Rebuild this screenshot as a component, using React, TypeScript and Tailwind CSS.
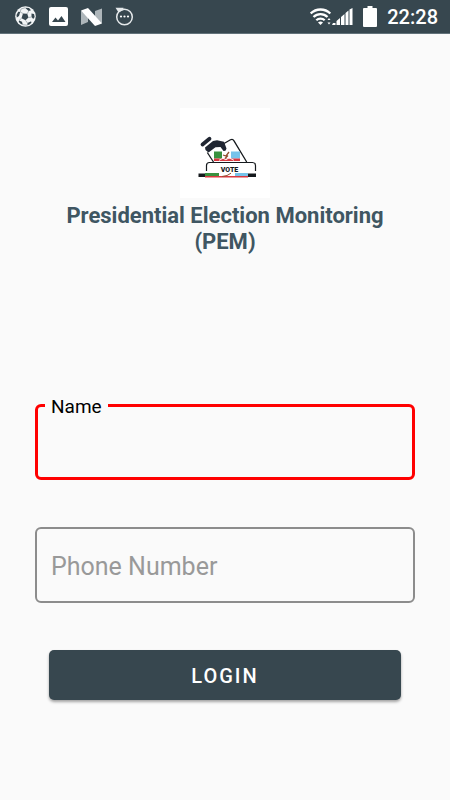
import { useState } from 'react'

function SoccerIcon() {
  return (
    <svg className="size-[21px]" viewBox="0 0 21 21" aria-hidden="true">
      <circle cx="10.5" cy="10.5" r="10.3" fill="#f3f5f6" />
      <g fill="#37474f">
        <path d="M8 7.500l4.200.3 1.300 3.700-3 2.800-4-2z" />
        <path d="M10 1.800l4 .2 2 2.200-2.300.8z" />
        <path d="M1.500 9l1.700-3.300L5.200 6 4 10l-2.200 1.500z" />
        <path d="M16.500 7.500l2.500.5.7 3-1.500 2-1.700-2z" />
        <path d="M4 14.500l3 1.200.8 3-2-.7-2-2z" />
        <path d="M12.500 17l3.200-1.500 1 .5-1.700 2.200-2.700 1z" />
      </g>
      <path
        d="M8 7.500L5.200 6M12.200 7.800l1.500-2.800M13.500 11.500l3-.5M10.500 14.300l2 2.700M6.500 12.300L4 14.500M10 1.800L6 3 5.200 6M7.800 18.700l4.500.5"
        fill="none"
        stroke="#8d989d"
        strokeWidth=".7"
      />
    </svg>
  )
}

function PhotoIcon() {
  return (
    <svg className="size-[19px]" viewBox="0 0 19 19" aria-hidden="true">
      <rect width="19" height="19" rx="2" fill="#fff" />
      <path d="M3 15l3.500-4.500L9 13.500 12.500 9l4 6z" fill="#37474f" />
    </svg>
  )
}

function NougatIcon() {
  return (
    <svg className="h-[18px] w-[21px]" viewBox="0 0 21 18" aria-hidden="true">
      <path d="M0 3l7 1v10l-7 3z" fill="#aeb6ba" />
      <path d="M14 3l7-2.500V15l-7 2z" fill="#aeb6ba" />
      <path d="M0 2.500L7 0 21 15.500 14 18z" fill="#fff" />
    </svg>
  )
}

function ChatIcon() {
  return (
    <svg className="size-[19px]" viewBox="0 0 19 19" fill="none" aria-hidden="true">
      <circle cx="9.500" cy="10" r="7.800" stroke="#e4e8ea" strokeWidth="1.500" />
      <path d="M.5.800h8v2.200L3.500 5.500z" fill="#e4e8ea" />
      <g fill="#fff">
        <circle cx="6" cy="9.500" r="1.100" />
        <circle cx="9.500" cy="9.500" r="1.100" />
        <circle cx="13" cy="9.500" r="1.100" />
      </g>
    </svg>
  )
}

function WifiIcon() {
  return (
    <svg className="h-[18px] w-[22px]" viewBox="0 0 22 18" fill="none" aria-hidden="true">
      <g stroke="#fff" strokeWidth="2.300">
        <path d="M.7 5.500a14 14 0 0 1 19.600 0" />
        <path d="M3.500 9a10 10 0 0 1 14 0" />
        <path d="M6.300 12.300a6 6 0 0 1 8.400 0" />
      </g>
      <path d="M8 14.500q2.500-2 5 0L10.500 17z" fill="#fff" />
      <path d="M17.500 12h3L19 10zM17.500 14.500h3L19 16.500z" fill="#fff" />
    </svg>
  )
}

function SignalIcon() {
  return (
    <svg className="h-[17px] w-[21px]" viewBox="0 0 21 17" fill="#fff" aria-hidden="true">
      <path d="M1 15h2.500v2H0zM4.500 13L8 10v7H4.500zM9 9l3.500-3v11H9zM13.500 5L16.500 2.500V17h-3zM17.500 1.500L20.500 0v17h-3z" />
    </svg>
  )
}

function BatteryIcon() {
  return (
    <svg className="h-[21px] w-[14px]" viewBox="0 0 14 21" fill="#fff" aria-hidden="true">
      <path d="M4.500 0h5v2H13q1 0 1 1v17q0 1-1 1H1q-1 0-1-1V3q0-1 1-1h3.500z" />
    </svg>
  )
}

function VoteLogo() {
  return (
    <svg className="size-[90px] bg-white" viewBox="0 0 90 90" role="img" aria-label="Vote">
      {/* Ballot paper */}
      <path d="M44 35.500l6.500-3.700q2.200-1.200 3.500 1L66.700 54" fill="none" stroke="#15191d" strokeWidth="1.300" />
      <path d="M27.300 44.500l6.200 9.500" fill="none" stroke="#15191d" strokeWidth="1.300" />
      <rect x="34" y="43.500" width="8" height="7" fill="#39913f" />
      <rect x="51" y="43.500" width="9" height="7" fill="#77c3ea" />
      <rect x="34" y="50.500" width="26" height="2.500" fill="#d93840" />
      <path d="M39 52.300l4-2 3 1.500 3-2 5 2.500" fill="none" stroke="#fff" strokeWidth=".9" />
      <path d="M43 47l3 1 3-4M45 50.500l3-3" fill="none" stroke="#91502f" strokeWidth="1.300" />

      {/* Hand */}
      <path d="M22.500 36.500l7-5.800" stroke="#202632" strokeWidth="3.800" strokeLinecap="round" />
      <path d="M25.500 42L25 39.500l8-6.500 4-.7 7 1.500 2.500 6.700q-.5 3-3 2.500l-3-4-5 .3-7 5.200z" fill="#202632" />

      {/* Box */}
      <path d="M26.500 63v-5.500q0-3 3-3h43q3 0 3 3V63" fill="#fff" stroke="#15191d" strokeWidth="1.200" />
      <text x="49.500" y="64" textAnchor="middle" fontFamily="Roboto, sans-serif" fontSize="7" fontWeight="900" fill="#15191d">VOTE</text>
      <rect x="18.500" y="65.500" width="57.500" height="3.500" fill="#15191d" />
      <rect x="25" y="65" width="14" height="3" fill="#39913f" />
      <rect x="39" y="65" width="16" height="3" fill="#fff" />
      <rect x="55" y="65" width="13" height="3" fill="#77c3ea" />
      <rect x="25" y="68" width="43" height="1.500" fill="#d93840" />
      <path d="M42 68.500l5-1 4-2.300" fill="none" stroke="#91502f" strokeWidth="1" />
    </svg>
  )
}

export default function App() {
  const [name, setName] = useState('')
  const [phone, setPhone] = useState('')

  return (
    <div className="min-h-screen bg-[#fafafa] font-['Roboto',sans-serif]">

      {/* Status bar */}
      <header className="flex h-[34px] items-center justify-between border-b border-[#62727a] bg-[#37474f] pr-3 pl-[15px] text-white">
        <div className="flex items-center gap-[13px]">
          <SoccerIcon />
          <PhotoIcon />
          <NougatIcon />
          <ChatIcon />
        </div>
        <div className="flex items-center">
          <WifiIcon />
          <SignalIcon />
          <div className="ml-2.5 flex items-center gap-2.5">
            <BatteryIcon />
            <span className="pt-px text-xl font-medium">22:28</span>
          </div>
        </div>
      </header>

      <main className="px-[35px] pt-[74px] pb-10">
        {/* Brand */}
        <div className="flex flex-col items-center">
          <VoteLogo />
          <h1 className="mt-[5px] text-center text-[22px] leading-[26px] font-bold text-[#3f5662]">
            Presidential Election Monitoring (PEM)
          </h1>
        </div>

        <form className="mt-[149px]" onSubmit={(e) => e.preventDefault()}>
          {/* Name */}
          <div className="relative">
            <label htmlFor="name" className="absolute -top-[7px] left-2.5 bg-[#fafafa] px-1.5 text-[19px] leading-5 text-black">
              Name
            </label>
            <input
              id="name"
              value={name}
              onChange={(e) => setName(e.target.value)}
              className="block h-[76px] w-full rounded-md border-3 border-[#ff0000] px-3.5 text-[25px] text-black outline-none"
            />
          </div>

          {/* Phone */}
          <input
            id="phone"
            type="tel"
            aria-label="Phone Number"
            placeholder="Phone Number"
            value={phone}
            onChange={(e) => setPhone(e.target.value)}
            className="mt-[47px] block h-[76px] w-full rounded-md border-2 border-[#8c8c8c] px-3.5 pt-0.5 text-[25px] text-black placeholder-[#999999] outline-none"
          />

          {/* Submit */}
          <div className="mt-[47px] px-3.5">
            <button
              type="submit"
              className="h-[50px] w-full rounded-[5px] bg-[#37474f] pt-0.5 text-xl font-medium tracking-widest text-white shadow-[0_2px_3px_rgba(0,0,0,0.35)]"
            >
              LOGIN
            </button>
          </div>
        </form>
      </main>
    </div>
  )
}
